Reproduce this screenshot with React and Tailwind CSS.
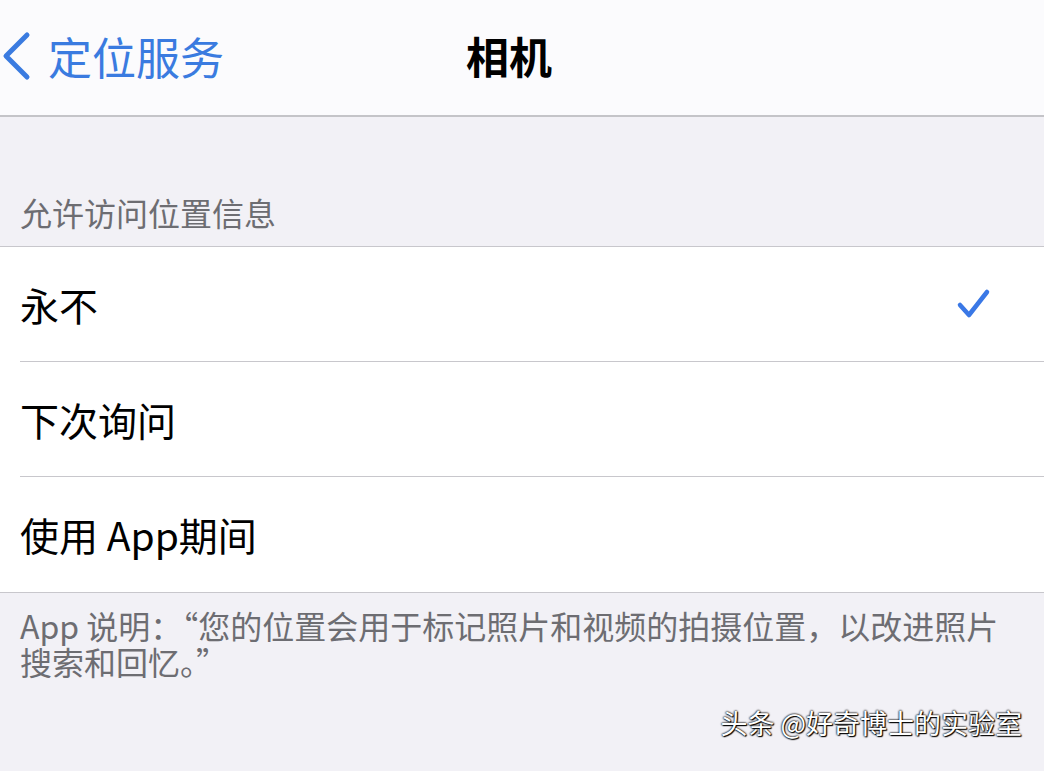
import React from 'react';

const rows = [
    { label: '永不', checked: true },
    { label: '下次询问', checked: false },
    { label: '使用 App期间', checked: false },
];

const Check = () => (
    <svg width="38" height="38" viewBox="0 0 38 38" fill="none">
        <path d="M6 20 L15 30 L33 7" stroke="#3a78e6" strokeWidth="4.5" strokeLinecap="round" strokeLinejoin="round" />
    </svg>
);

const App = () => {
    return (
        <div className="w-[1044px] h-[771px] overflow-hidden bg-[#f2f1f6] font-['Noto_Sans_CJK_SC','Noto_Sans',sans-serif]">
            <nav className="grid grid-cols-[1fr_auto_1fr] items-center h-[117px] bg-[#fbfbfd] border-b-2 border-[#c4c4c8]">
                <div className="flex items-center text-[#3a7be0] -mt-[4px]">
                    <svg width="34" height="50" viewBox="0 0 34 50" fill="none">
                        <path d="M27 4 L6 25 L27 46" stroke="#3a7be0" strokeWidth="5" strokeLinecap="round" strokeLinejoin="round" />
                    </svg>
                    <span className="ml-[14px] text-[44px] leading-none">定位服务</span>
                </div>
                <div className="text-[43px] font-bold text-black leading-none mr-[26px] -mt-[4px]">相机</div>
                <div />
            </nav>

            <div className="h-[129px] flex items-end px-[20px] pb-[18px]">
                <span className="text-[32px] text-[#6d6d72] leading-none">允许访问位置信息</span>
            </div>

            <div className="bg-white border-t border-b border-[#c8c7cc]">
                {rows.map((row, i) => (
                    <div key={row.label} className="pl-[20px]">
                        <div className={`flex items-center justify-between h-[115px] pr-[52px] ${i < rows.length - 1 ? 'border-b border-[#c8c7cc]' : ''}`}>
                            <span className="text-[39px] text-black leading-none">{row.label}</span>
                            {row.checked && <Check />}
                        </div>
                    </div>
                ))}
            </div>

            <div className="px-[20px] pt-[16px] text-[32px] text-[#6d6d72] whitespace-nowrap">
                <p className="leading-[32px]">App 说明：“您的位置会用于标记照片和视频的拍摄位置，以改进照片</p>
                <p className="leading-[32px] mt-[4px]">搜索和回忆。”</p>
            </div>

            <div className="flex justify-end pr-[22px] mt-[32px]">
                <span className="text-[27px] leading-none text-white [text-shadow:0_0_2px_#000,0_0_2px_#000,1px_1px_1px_#000]">头条 @好奇博士的实验室</span>
            </div>
        </div>
    );
};

export default App;
